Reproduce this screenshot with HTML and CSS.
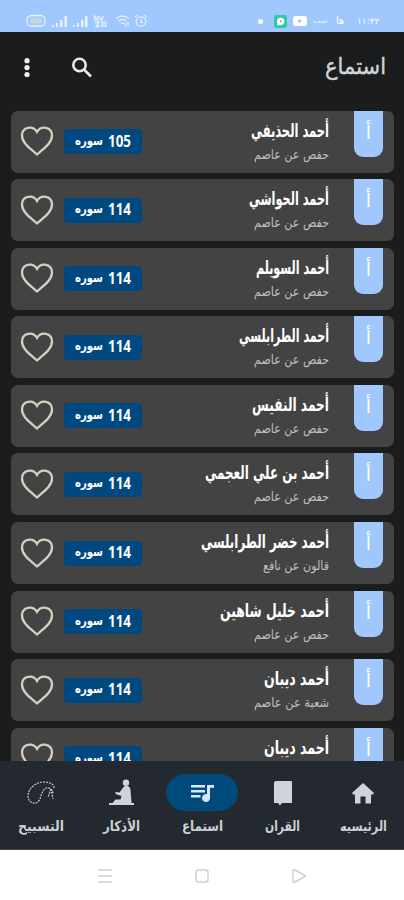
FILE: index.html
```
<!DOCTYPE html>
<html lang="ar">
<head>
<meta charset="utf-8">
<title>استماع</title>
<link rel="stylesheet" href="styles.css">
</head>
<body>
<div class="status">
  <svg class="status-left" width="124" height="14" viewBox="0 0 124 14">
    <rect x="1" y="1.500" width="18" height="10.500" rx="4.500" class="line"/>
    <rect x="4" y="4" width="12" height="5.500" rx="2" class="soft"/>
    <path class="fill" d="M26 11h2v2h-2zM30 9h2v4h-2zM34 6h2.500v7H34zM38.500 2H41v11h-2.500zM47 11h2v2h-2zM51 9h2v4h-2zM55 6h2.500v7H55zM59 2h2.500v11H59z"/>
    <path class="line" d="M68.500 7V2l3.500 5V2M73.500 2l2 5 2-5M69 8.500h4l-3 4h4M76 8.500h4v3.500h-4z"/>
    <path class="line" d="M90 4.500q6.500-5 13 0M92.500 7q4-3 8 0M95 9.500q1.500-1 3 0M99.500 9v3.500M102 8v4"/>
    <circle cx="115" cy="7.500" r="4.700" class="line"/>
    <path class="line" d="M115 5v3l2 1M109 3l2.500-2M121 3l-2.500-2"/>
  </svg>
  <div class="status-right">
    <i class="dot"></i>
    <svg class="app" width="13" height="13" viewBox="0 0 13 13"><rect width="13" height="13" rx="2" fill="#35c7a5"/><circle cx="6.700" cy="6.300" r="3.600" fill="#fff"/><path d="M3 11l1-4 3 2z" fill="#fff"/><circle cx="6.700" cy="6.300" r="1" fill="#35c7a5"/></svg>
    <svg class="tube" width="14" height="10" viewBox="0 0 14 10"><rect width="14" height="10" rx="2.500" fill="#fff"/><path d="M5.500 3v4L9 5z" fill="#8db5e8"/></svg>
    <span class="tiny">سب</span>
    <span class="ha">ها</span>
    <span class="clock">١١:٢٢</span>
  </div>
</div>
<header class="bar">
  <svg class="more" width="8" height="22" viewBox="0 0 8 22"><circle cx="4" cy="3.700" r="2.600"/><circle cx="4" cy="10.600" r="2.600"/><circle cx="4" cy="17.500" r="2.600"/></svg>
  <svg class="search" width="22" height="22" viewBox="0 0 22 22"><circle cx="8.500" cy="8" r="6.200"/><path d="M13 12.500l7 7"/></svg>
  <svg class="txt title" width="61" height="30"><text x="61" y="21" textLength="61" lengthAdjust="spacingAndGlyphs">استماع</text></svg>
</header>
<main class="list" id="list"></main>
<nav class="tabs">
  <div class="tab">
    <div class="pill"><svg width="28" height="24" viewBox="0 0 28 24"><path class="beads" d="M27 7C27 2 21 1 15 1 8 2 1 8 1 15c0 5 4 8 8 7 6-2 4-12 10-15 4-1 7 2 7 5M24 8l-3 8M24 8l2 10"/></svg></div>
    <svg class="txt label" width="46" height="20"><text x="46" y="14" textLength="46" lengthAdjust="spacingAndGlyphs">التسبيح</text></svg>
  </div>
  <div class="tab">
    <div class="pill"><svg width="25" height="27" viewBox="0 0 25 27"><g class="icon"><circle cx="17" cy="3.800" r="3.200"/><path d="M14.500 8q1-1.500 4-1 2.500.5 3 4l1 13H25v2H0v-2h3.500l3-3.500h5l1-3.500-6-2v-2l4 .500z"/></g></svg></div>
    <svg class="txt label" width="37" height="20"><text x="37" y="14" textLength="37" lengthAdjust="spacingAndGlyphs">الأذكار</text></svg>
  </div>
  <div class="tab active">
    <div class="pill"><svg width="23" height="20" viewBox="0 0 23 20"><path class="icon" d="M0 2h14v2.500H0zM0 7h14v2.500H0zM0 12h9.500v2.500H0zM16 2h7v2.800h-4V15a4 4 0 1 1-3-3.800z"/></svg></div>
    <svg class="txt label" width="41" height="20"><text x="41" y="14" textLength="41" lengthAdjust="spacingAndGlyphs">استماع</text></svg>
  </div>
  <div class="tab">
    <div class="pill"><svg width="20" height="26" viewBox="0 0 20 26"><path class="icon" d="M3 1h15q1 0 1 1v21H9l-2 2.500L5 23H1V3q0-2 2-2z"/></svg></div>
    <svg class="txt label" width="35" height="20"><text x="35" y="14" textLength="35" lengthAdjust="spacingAndGlyphs">القران</text></svg>
  </div>
  <div class="tab">
    <div class="pill"><svg width="22" height="22" viewBox="0 0 22 22"><path class="icon" d="M11 1l11 10-1 1.500H19v9h-5.500v-7h-5v7H3v-9H1L0 11z"/></svg></div>
    <svg class="txt label" width="47" height="20"><text x="47" y="14" textLength="47" lengthAdjust="spacingAndGlyphs">الرئيسيه</text></svg>
  </div>
</nav>
<footer class="system">
  <svg width="16" height="16" viewBox="0 0 16 16"><path d="M1 2h14M1 8h14M1 14h14"/></svg>
  <svg width="16" height="16" viewBox="0 0 16 16"><rect x="2" y="2" width="12" height="12" rx="2"/></svg>
  <svg width="16" height="16" viewBox="0 0 16 16"><path d="M2 3v10q0 2 2 1l9-5q2-1 0-2L4 2Q2 1 2 3z"/></svg>
</footer>
<script src="list.js"></script>
</body>
</html>
```
FILE: styles.css
```
* { box-sizing: border-box; }
body { margin: 0; width: 404px; height: 900px; overflow: hidden; background: #1b1c1e; display: flex; flex-direction: column; font-family: "DejaVu Sans", sans-serif; }
svg { display: block; flex: none; overflow: visible; }
.txt { direction: rtl; }
.status { height: 32px; flex: none; background: #a0c8ff; display: flex; justify-content: space-between; padding: 14px 25px 0 26px; color: #fff; }
.line { fill: none; stroke: #e4f1fa; stroke-width: 1.300; }
.soft { fill: #c6d5d8; }
.fill { fill: #e4f1fa; }
.status-right { display: flex; align-items: center; height: 14px; direction: ltr; line-height: 14px; }
.dot { width: 5px; height: 5px; border-radius: 50%; background: #fff; margin-right: 11px; }
.app { margin-right: 6px; }
.tube { margin-right: 6px; }
.tiny { font-size: 8px; width: 14px; margin-right: 9px; opacity: .8; }
.ha { font-size: 10px; width: 10px; margin-right: 11px; }
.clock { font-size: 9px; width: 22px; white-space: nowrap; }
.bar { height: 72px; flex: none; display: flex; align-items: center; padding: 0 18px 0 23px; }
.more { fill: #f2f2f2; }
.search { margin-left: 40px; fill: none; stroke: #e8e8e8; stroke-width: 2.600; }
.title { margin-left: auto; fill: #d2d3d5; stroke: #d2d3d5; stroke-width: .4; font-size: 23px; }
.list { height: 657px; flex: none; overflow: hidden; padding: 6.500px 10px 0 11px; display: flex; flex-direction: column; gap: 6.600px; }
.card { height: 62px; flex: none; border-radius: 7px; background: #434343; display: flex; align-items: flex-start; padding-right: 11px; }
.heart { margin: 15.500px 0 0 9px; fill: none; stroke: #d2d0c1; stroke-width: 2.300; }
.badge { width: 78px; height: 25px; margin: 18.500px 0 0 10px; border-radius: 4px; background: #004880; color: #fff; display: flex; align-items: center; justify-content: center; gap: 5px; }
.num { font: 700 16.500px "Noto Sans", sans-serif; fill: #fff; }
.sura { font-weight: 700; font-size: 13px; fill: #fff; }
.names { margin: 9px 25px 0 auto; display: flex; flex-direction: column; align-items: flex-end; }
.name { fill: #fff; font-weight: 700; font-size: 19px; }
.riwaya { fill: #bfbfbf; font-size: 13px; }
.letter { width: 29px; height: 46px; border-radius: 0 0 9px 9px; background: #a0c8ff; color: #fff; font-size: 19px; line-height: 42px; text-align: center; }
.tabs { height: 89px; flex: none; background: #242930; display: flex; justify-content: center; padding-top: 13px; border-bottom: 1px solid #41464b; }
.tab { width: 80.700px; display: flex; flex-direction: column; align-items: center; gap: 6px; }
.pill { width: 72px; height: 37px; border-radius: 19px; display: flex; align-items: center; justify-content: center; }
.active .pill { background: #004a7c; }
.icon { fill: #d1d3dc; }
.active .icon { fill: #d6e7ff; }
.beads { fill: none; stroke: #c5c7cf; stroke-width: 1.200; stroke-dasharray: 2 1; }
.label { fill: #cdd0d6; font-weight: 700; font-size: 14px; }
.system { flex: 1; background: #fff; display: flex; justify-content: center; gap: 81px; padding-top: 18px; }
.system svg { fill: none; stroke: #cfcfcf; stroke-width: 1.500; }
```
FILE: list.js
```
const hafs = ["حفص عن عاصم", 75];
const readers = [
  ["أحمد الحذيفي", 78, ...hafs, 105],
  ["أحمد الحواشي", 80, ...hafs, 114],
  ["أحمد السويلم", 73, ...hafs, 114],
  ["أحمد الطرابلسي", 90, ...hafs, 114],
  ["أحمد النفيس", 77, ...hafs, 114],
  ["أحمد بن علي العجمي", 124, ...hafs, 114],
  ["أحمد خضر الطرابلسي", 128, "قالون عن نافع", 66, 114],
  ["أحمد خليل شاهين", 109, ...hafs, 114],
  ["أحمد ديبان", 65, "شعبة عن عاصم", 75, 114],
  ["أحمد ديبان", 65, ...hafs, 114]
];

function label(cls, text, width, height, base) {
  return `<svg class="txt ${cls}" width="${width}" height="${height}"><text x="${width}" y="${base}" textLength="${width}" lengthAdjust="spacingAndGlyphs">${text}</text></svg>`;
}

document.getElementById("list").innerHTML = readers.map(([name, nw, riwaya, rw, count]) => `
  <article class="card">
    <svg class="heart" width="34" height="31" viewBox="0 0 34 31"><path d="M17 28.500C11 23 2 17.500 2 9.500 2 1 13-1 17 6c4-7 15-5 15 3.500 0 8-9 13.500-15 19z"/></svg>
    <div class="badge">
      ${label("sura", "سوره", 28, 20, 13)}
      <svg class="num" width="23" height="20"><text x="0" y="15" textLength="23" lengthAdjust="spacingAndGlyphs">${count}</text></svg>
    </div>
    <div class="names">
      ${label("name", name, nw, 24, 17)}
      ${label("riwaya", riwaya, rw, 18, 15)}
    </div>
    <div class="letter">أ</div>
  </article>`).join("");
```
